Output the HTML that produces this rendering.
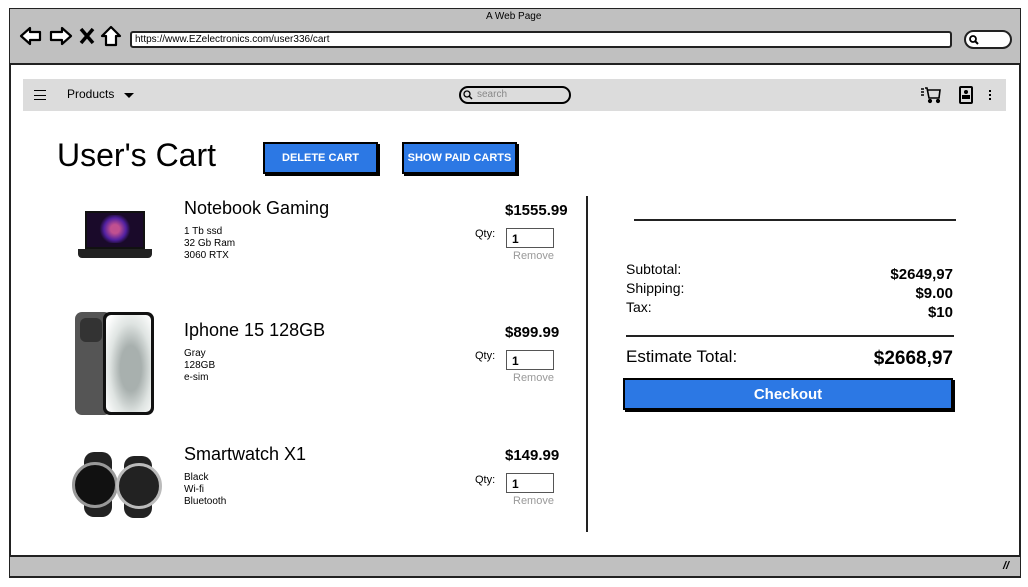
<!DOCTYPE html>
<html><head><meta charset="utf-8"><style>
*{margin:0;padding:0;box-sizing:border-box}
body{width:1028px;height:587px;background:#fff;position:relative;font-family:"Liberation Sans",sans-serif;color:#000;overflow:hidden}
.a{position:absolute}
.btn{position:absolute;background:#2c78e4;color:#fff;border:2px solid #000;box-shadow:2px 2px 0 #000;font-weight:bold;display:flex;align-items:center;justify-content:center}
.qty{position:absolute;width:48px;height:20px;border:1.5px solid #555;font-size:12px;font-weight:bold;padding:3px 0 0 5px}
.rm{position:absolute;font-size:11px;color:#999}
.sm{position:absolute;font-size:10px;line-height:12px}
.pr{position:absolute;font-size:15px;font-weight:bold}
.t{position:absolute;font-size:18px}
</style></head><body>
<div class="a" style="left:9px;top:8px;width:1012px;height:570px;border:2px solid #222;background:#fff"></div>
<div class="a" style="left:10px;top:9px;width:1010px;height:56px;background:#c0c0c0;border-bottom:2px solid #222"></div>
<div class="a" style="left:486px;top:11px;font-size:10px">A Web Page</div>
<svg class="a" style="left:18px;top:24px" width="110" height="24" viewBox="0 0 110 24" fill="#fff" stroke="#000" stroke-width="2.2" stroke-linejoin="round">
<path d="M3 12 L12 4 V8 H22 V16 H12 V20 Z"/>
<path d="M53 12 L44 4 V8 H33 V16 H44 V20 Z"/>
<path d="M63 5 L75 19 M75 5 L63 19" stroke-width="3.5"/>
<path d="M84 12 L93 3 L102 12 H98 V21 H88 V12 Z"/>
</svg>
<div class="a" style="left:130px;top:31px;width:822px;height:17px;background:#fff;border:2px solid #222;border-radius:3px;font-size:10px;padding:1px 3px">https://www.EZelectronics.com/user336/cart</div>
<div class="a" style="left:964px;top:30px;width:48px;height:19px;background:#fff;border:2px solid #222;border-radius:10px"></div>
<svg class="a" style="left:968px;top:34px" width="12" height="12"><circle cx="5" cy="5" r="3" fill="none" stroke="#000" stroke-width="1.8"/><path d="M7 7 L10 10" stroke="#000" stroke-width="2"/></svg>
<div class="a" style="left:10px;top:555px;width:1010px;height:21px;background:#c0c0c0;border-top:2px solid #222"></div>
<div class="a" style="left:1003px;top:560px;font-size:11px;font-weight:bold;font-style:italic">//</div>
<div class="a" style="left:23px;top:79px;width:983px;height:32px;background:#dcdcdc"></div>
<div class="a" style="left:34px;top:90px;width:12px;height:10px;border-top:1.5px solid #000;border-bottom:1.5px solid #000"></div>
<div class="a" style="left:34px;top:94.5px;width:12px;height:1.5px;background:#000"></div>
<div class="a" style="left:67px;top:87px;font-size:12px">Products</div>
<div class="a" style="left:124px;top:93px;width:0;height:0;border-left:5px solid transparent;border-right:5px solid transparent;border-top:5px solid #000"></div>
<div class="a" style="left:459px;top:86px;width:112px;height:18px;border:2px solid #000;border-radius:9px;background:#dcdcdc;font-size:10px;color:#888;padding:0 0 0 16px;line-height:14px">search</div>
<svg class="a" style="left:463px;top:90px" width="10" height="10"><circle cx="4" cy="4" r="3" fill="none" stroke="#000" stroke-width="1.3"/><path d="M6 6 L9 9" stroke="#000" stroke-width="1.5"/></svg>
<svg class="a" style="left:920px;top:86px" width="22" height="18" fill="none" stroke="#000" stroke-width="1.6"><path d="M1 3h3M1 6h3M1 9h3M5 2h2l2 10h10l1-8H8"/><circle cx="10" cy="15" r="1.3" fill="#000"/><circle cx="18" cy="15" r="1.3" fill="#000"/></svg>
<div class="a" style="left:959px;top:86px;width:14px;height:18px;border:2px solid #000;border-radius:2px"></div>
<div class="a" style="left:964px;top:90px;width:4px;height:4px;background:#000;border-radius:50%"></div>
<div class="a" style="left:962px;top:95px;width:8px;height:4px;background:#000"></div>
<div class="a" style="left:989px;top:90px;width:2px;height:2px;background:#000;box-shadow:0 4px 0 #000,0 8px 0 #000"></div>

<div class="a" style="left:57px;top:137px;font-size:32px">User's Cart</div>
<div class="btn" style="left:263px;top:142px;width:115px;height:32px;font-size:11px">DELETE CART</div>
<div class="btn" style="left:402px;top:142px;width:115px;height:32px;font-size:11px">SHOW PAID CARTS</div>

<div class="a" style="left:85px;top:211px;width:60px;height:38px;background:#1a0a2a;border:2px solid #111"></div>
<div class="a" style="left:98px;top:215px;width:34px;height:28px;background:radial-gradient(circle,#c05090 20%,#5020a0 50%,#1a0a2a 70%)"></div>
<div class="a" style="left:78px;top:249px;width:74px;height:9px;background:#222;border-radius:0 0 4px 4px"></div>
<div class="a" style="left:75px;top:312px;width:36px;height:103px;background:#555;border-radius:7px"></div>
<div class="a" style="left:80px;top:318px;width:22px;height:24px;background:#333;border-radius:6px"></div>
<div class="a" style="left:103px;top:312px;width:51px;height:103px;background:#111;border-radius:7px"></div>
<div class="a" style="left:106px;top:315px;width:45px;height:97px;background:radial-gradient(ellipse at 55% 55%,#a8b0ae 30%,#dfe4e2 60%,#fff 90%);border-radius:5px"></div>
<div class="a" style="left:84px;top:452px;width:28px;height:65px;background:#222;border-radius:10px"></div>
<div class="a" style="left:72px;top:462px;width:46px;height:46px;background:#111;border:3px solid #999;border-radius:50%"></div>
<div class="a" style="left:124px;top:456px;width:28px;height:62px;background:#222;border-radius:10px"></div>
<div class="a" style="left:116px;top:463px;width:46px;height:46px;background:#222;border:3px solid #bbb;border-radius:50%"></div>

<div class="t" style="left:184px;top:198px">Notebook Gaming</div>
<div class="sm" style="left:184px;top:226px">1 Tb ssd<br>32 Gb Ram<br>3060 RTX</div>
<div class="t" style="left:184px;top:320px">Iphone 15 128GB</div>
<div class="sm" style="left:184px;top:348px">Gray<br>128GB<br>e-sim</div>
<div class="t" style="left:184px;top:444px">Smartwatch X1</div>
<div class="sm" style="left:184px;top:472px">Black<br>Wi-fi<br>Bluetooth</div>

<div class="pr" style="left:505px;top:202px">$1555.99</div>
<div class="a" style="left:475px;top:228px;font-size:11px">Qty:</div>
<div class="qty" style="left:506px;top:228px">1</div>
<div class="rm" style="left:513px;top:250px">Remove</div>
<div class="pr" style="left:505px;top:324px">$899.99</div>
<div class="a" style="left:475px;top:350px;font-size:11px">Qty:</div>
<div class="qty" style="left:506px;top:350px">1</div>
<div class="rm" style="left:513px;top:372px">Remove</div>
<div class="pr" style="left:505px;top:447px">$149.99</div>
<div class="a" style="left:475px;top:474px;font-size:11px">Qty:</div>
<div class="qty" style="left:506px;top:473px">1</div>
<div class="rm" style="left:513px;top:495px">Remove</div>

<div class="a" style="left:586px;top:196px;width:2px;height:336px;background:#222"></div>
<div class="a" style="left:634px;top:219px;width:322px;height:1.5px;background:#222"></div>
<div class="a" style="left:626px;top:260px;font-size:14px;line-height:19px">Subtotal:<br>Shipping:<br>Tax:</div>
<div class="a" style="left:840px;top:265px;width:113px;text-align:right;font-size:15px;font-weight:bold;line-height:19px">$2649,97<br>$9.00<br>$10</div>
<div class="a" style="left:626px;top:335px;width:328px;height:1.5px;background:#222"></div>
<div class="a" style="left:626px;top:347px;font-size:17px">Estimate Total:</div>
<div class="a" style="left:820px;top:348px;width:133px;text-align:right;font-size:19px;font-weight:bold">$2668,97</div>
<div class="btn" style="left:623px;top:378px;width:330px;height:32px;font-size:15px">Checkout</div>
</body></html>
